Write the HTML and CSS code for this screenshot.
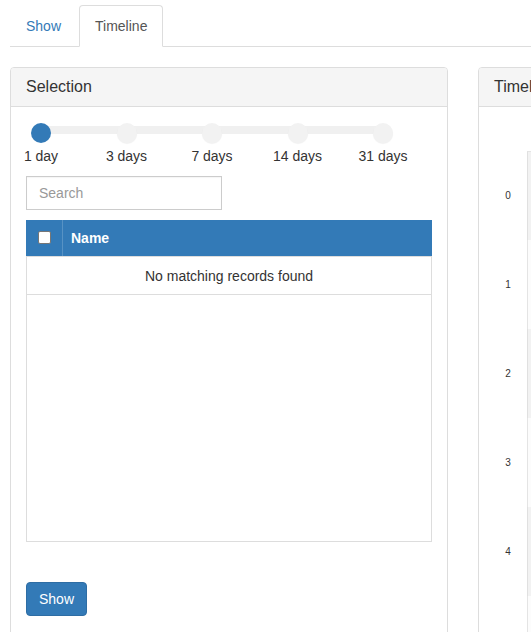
FILE: index.html
```html
<!DOCTYPE html>
<html lang="en">
<head>
<meta charset="utf-8">
<title>Timeline</title>
<link rel="stylesheet" href="styles.css">
</head>
<body>
<div class="page">
  <ul class="tabs">
    <li class="tab">Show</li>
    <li class="tab active">Timeline</li>
  </ul>
  <div class="row">
    <section class="panel">
      <div class="panel-heading">Selection</div>
      <div class="panel-body">
        <div class="slider">
          <div class="track"></div>
          <div class="stops">
            <div class="stop"><span class="handle on"></span><span class="label">1 day</span></div>
            <div class="stop"><span class="handle"></span><span class="label">3 days</span></div>
            <div class="stop"><span class="handle"></span><span class="label">7 days</span></div>
            <div class="stop"><span class="handle"></span><span class="label">14 days</span></div>
            <div class="stop"><span class="handle"></span><span class="label">31 days</span></div>
          </div>
        </div>
        <input class="search" type="text" placeholder="Search">
        <div class="table">
          <div class="thead">
            <div class="th-check"><span class="checkbox"></span></div>
            <div class="th-name">Name</div>
          </div>
          <div class="tbody">
            <div class="empty-row">No matching records found</div>
          </div>
        </div>
        <button class="btn" type="button">Show</button>
      </div>
    </section>
    <section class="panel">
      <div class="panel-heading">Timeline</div>
      <div class="panel-body">
        <div class="chart">
          <div class="band"><span class="axis">0</span><span class="lane gray"></span></div>
          <div class="band"><span class="axis">1</span><span class="lane"></span></div>
          <div class="band"><span class="axis">2</span><span class="lane gray"></span></div>
          <div class="band"><span class="axis">3</span><span class="lane"></span></div>
          <div class="band"><span class="axis">4</span><span class="lane gray"></span></div>
          <div class="band"><span class="axis">5</span><span class="lane"></span></div>
        </div>
      </div>
    </section>
  </div>
</div>
</body>
</html>
```
FILE: styles.css
```css
html, body {
  margin: 0;
  padding: 0;
  overflow: hidden;
  background: #fff;
}
body {
  font-family: "Liberation Sans", Arial, sans-serif;
  font-size: 14px;
  line-height: 1.42857;
  color: #333;
}
.page {
  padding: 5px 0 0 10px;
  width: 1000px;
}
.tabs {
  display: flex;
  list-style: none;
  margin: 0;
  padding: 0;
  border-bottom: 1px solid #ddd;
}
.tab {
  padding: 11px 15px 9px;
  border: 1px solid transparent;
  border-radius: 4px 4px 0 0;
  margin-right: 2px;
  margin-bottom: -1px;
  color: #337ab7;
}
.tab.active {
  color: #555;
  background: #fff;
  border-color: #ddd;
  border-bottom-color: #fff;
}
.row {
  display: flex;
  gap: 30px;
  margin-top: 20px;
}
.panel {
  box-sizing: border-box;
  width: 438px;
  height: 620px;
  border: 1px solid #ddd;
  border-radius: 4px;
  background: #fff;
  flex: none;
}
.panel-heading {
  padding: 10px 15px;
  background: #f5f5f5;
  border-bottom: 1px solid #ddd;
  border-radius: 3px 3px 0 0;
  font-size: 16px;
  line-height: 1.1;
  color: #333;
}
.panel-body {
  padding: 15px;
}
.slider {
  position: relative;
  width: 372px;
  margin-top: 1px;
}
.track {
  position: absolute;
  left: 15px;
  right: 15px;
  top: 3px;
  height: 8px;
  border-radius: 4px;
  background: #f0f0f0;
}
.stops {
  position: relative;
  display: flex;
  justify-content: space-between;
}
.stop {
  width: 30px;
  display: flex;
  flex-direction: column;
  align-items: center;
}
.handle {
  width: 20px;
  height: 20px;
  border-radius: 50%;
  background: #f2f2f2;
  box-shadow: 0 1px 1px rgba(0, 0, 0, 0.06);
}
.handle.on {
  background: #337ab7;
  box-shadow: none;
}
.label {
  margin-top: 4px;
  white-space: nowrap;
  display: flex;
  justify-content: center;
  width: 30px;
  color: #333;
}
.search {
  display: block;
  box-sizing: border-box;
  width: 196px;
  height: 34px;
  margin-top: 9px;
  padding: 6px 12px;
  border: 1px solid #ccc;
  border-radius: 0;
  font-family: inherit;
  font-size: 14px;
  color: #555;
  box-shadow: inset 0 1px 1px rgba(0, 0, 0, 0.04);
}
.search::placeholder {
  color: #999;
}
.table {
  width: 406px;
  margin-top: 10px;
}
.thead {
  display: flex;
  height: 36px;
  background: #337ab7;
  color: #fff;
  font-weight: bold;
}
.th-check {
  width: 36px;
  display: flex;
  align-items: center;
  justify-content: center;
}
.checkbox {
  box-sizing: border-box;
  width: 13px;
  height: 13px;
  background: #fff;
  border: 1px solid #767676;
  border-radius: 2px;
}
.th-name {
  flex: 1;
  border-left: 1px solid rgba(255, 255, 255, 0.18);
  padding: 8px;
  line-height: 20px;
}
.tbody {
  box-sizing: border-box;
  height: 286px;
  border: 1px solid #ddd;
}
.empty-row {
  padding: 9px 8px 8px;
  line-height: 20px;
  text-align: center;
  border-bottom: 1px solid #ddd;
}
.btn {
  display: block;
  margin-top: 40px;
  padding: 6px 12px;
  font-family: inherit;
  font-size: 14px;
  line-height: 20px;
  color: #fff;
  background: #337ab7;
  border: 1px solid #2e6da4;
  border-radius: 4px;
}
.chart {
  margin-top: 29px;
}
.band {
  display: flex;
  height: 89px;
}
.axis {
  width: 28px;
  margin-right: 5px;
  padding-top: 3px;
  display: flex;
  align-items: center;
  justify-content: center;
  font-size: 10px;
  color: #333;
}
.lane {
  flex: 1;
  border-left: 1px solid #e4e4e4;
  background: #fcfcfc;
}
.lane.gray {
  background: #f2f2f2;
  border-left-color: #e0e0e0;
}
.band:first-child .lane {
  border-top: 1px solid #e4e4e4;
}
```
